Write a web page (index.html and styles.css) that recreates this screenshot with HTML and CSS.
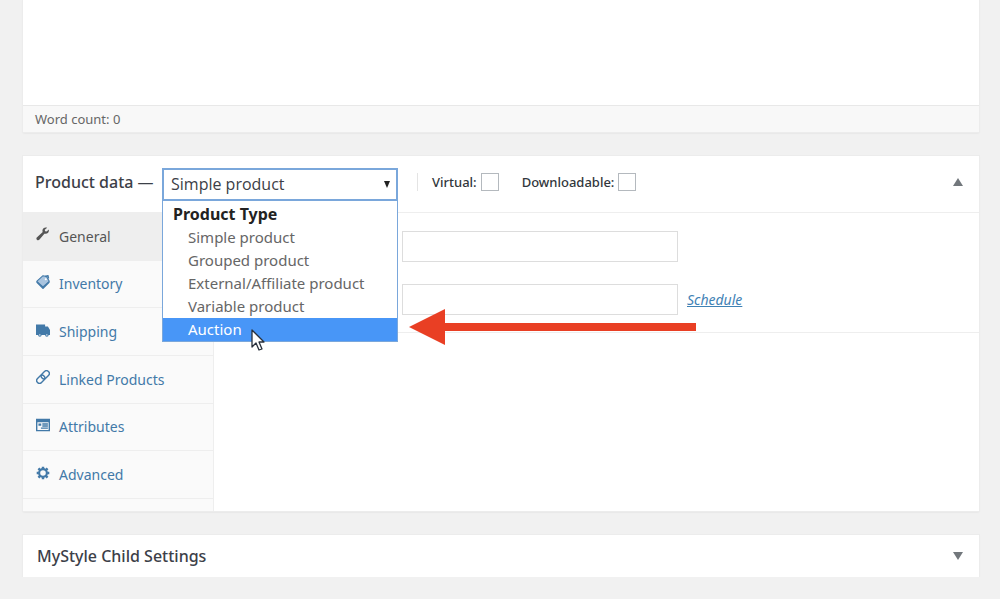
FILE: index.html
```html
<!DOCTYPE html>
<html lang="en">
<head>
    <meta charset="UTF-8">
    <meta name="viewport" content="width=device-width, initial-scale=1.0">
    <title>Edit product</title>
    <link rel="stylesheet" href="styles.css">
</head>
<body>

    <div class="editor">
        <textarea class="editor-text" aria-label="Product description"></textarea>
        <div class="word-count">Word count: 0</div>
    </div>

    <section class="postbox">
        <div class="product-header">
            <label class="title" for="product-type">Product data —</label>
            <div class="type-picker">
                <select id="product-type">
                    <option>Simple product</option>
                </select>
                <div class="type-menu" role="listbox" aria-label="Product Type">
                    <div class="type-group">Product Type</div>
                    <button type="button" role="option">Simple product</button>
                    <button type="button" role="option">Grouped product</button>
                    <button type="button" role="option">External/Affiliate product</button>
                    <button type="button" role="option">Variable product</button>
                    <button type="button" role="option" class="selected">Auction</button>
                </div>
                <!-- mouse pointer -->
                <svg class="pointer" width="16" height="24" viewBox="0 0 16 24">
                    <path d="M2 2v17l4-4 3 7 3-1-3-7h5z" fill="#fff" stroke="#28303c" stroke-width="1.3" stroke-linejoin="round"/>
                </svg>
                <!-- arrow to the Auction option -->
                <svg class="arrow" width="288" height="36" viewBox="0 0 288 36">
                    <path d="M0 18L36 0v14h251v8H36v14z" fill="#e93f24"/>
                </svg>
            </div>
            <div class="checks">
                <label>Virtual: <input type="checkbox"></label>
                <label>Downloadable: <input type="checkbox"></label>
            </div>
            <button type="button" class="toggle" aria-label="Collapse Product data">
                <svg width="10" height="8" viewBox="0 0 10 8"><path d="M5 0l5 8H0z"/></svg>
            </button>
        </div>

        <div class="product-body">
            <nav class="tabs">
                <a href="#general" class="active">
                    <svg width="14" height="14" viewBox="0 0 20 20"><path fill="currentColor" d="M18.500 3.500l-3.500 3-2-.5-.5-2 3.500-3C13 0 10.500 1 9.500 3.500c-.5 1.500-.3 2.500.1 3.500L1.500 14.500c-1.200 1-1.200 2.700-.2 3.700s2.700 1 3.700-.2l7-8.500c3.500 1.300 7-1.500 6.500-6z"/></svg>
                    General
                </a>
                <a href="#inventory">
                    <svg width="14" height="14" viewBox="0 0 20 20"><path fill="#a9c4df" stroke="currentColor" stroke-width="1.500" stroke-linejoin="round" d="M1 9l9-8 5 1 4 7-9 8z"/><path fill="none" stroke="currentColor" stroke-width="2" d="M1 10l9 9 9-9M13 2l4-1 1 4"/><circle cx="14" cy="6" r="1.500" fill="#fff"/></svg>
                    Inventory
                </a>
                <a href="#shipping">
                    <svg width="16" height="14" viewBox="0 0 20 18"><path fill="currentColor" d="M0 1h13v3h4l3 5v7h-2a2.500 2.500 0 0 1-5 0H8a2.500 2.500 0 0 1-5 0H0z"/><circle cx="5.500" cy="16" r="1" fill="#fff"/><circle cx="15.500" cy="16" r="1" fill="#fff"/></svg>
                    Shipping
                </a>
                <a href="#linked">
                    <svg width="14" height="14" viewBox="0 0 20 20"><g fill="none" stroke="currentColor" stroke-width="2" transform="rotate(-45 10 10)"><rect x="-1" y="6" width="13" height="8" rx="4"/><rect x="8" y="6" width="13" height="8" rx="4"/></g></svg>
                    Linked Products
                </a>
                <a href="#attributes">
                    <svg width="14" height="14" viewBox="0 0 20 20"><path fill="currentColor" fill-rule="evenodd" d="M0 1h20v18H0zM2 6v11h16V6zM3.500 8h4v3h-4zM9 7.500h8v2H9zm0 3h8v2H9zm-2 3h10v2H7z"/></svg>
                    Attributes
                </a>
                <a href="#advanced">
                    <svg width="14" height="14" viewBox="0 0 20 20"><circle cx="10" cy="10" r="5.500" fill="none" stroke="currentColor" stroke-width="3"/><path stroke="currentColor" stroke-width="3.500" d="M10 1v3M10 16v3M1 10h3M16 10h3M3.500 3.500l2 2M14.500 14.500l2 2M16.500 3.500l-2 2M5.500 14.500l-2 2"/></svg>
                    Advanced
                </a>
            </nav>
            <div class="options">
                <div class="prices">
                    <input type="text" aria-label="Regular price">
                    <div class="sale-row">
                        <input type="text" aria-label="Sale price">
                        <a href="#schedule">Schedule</a>
                    </div>
                </div>
            </div>
        </div>
    </section>

    <section class="postbox settings">
        <h2 class="title">MyStyle Child Settings</h2>
        <button type="button" class="toggle" aria-label="Expand MyStyle Child Settings">
            <svg width="10" height="8" viewBox="0 0 10 8"><path d="M0 0h10L5 8z"/></svg>
        </button>
    </section>

</body>
</html>
```

FILE: styles.css
```css
* {
    box-sizing: border-box;
}
body {
    margin: 0;
    padding: 0 21px 0 23px;
    background-color: #f1f1f1;
    color: #32373c;
    font-family: "Noto Sans", "Open Sans", sans-serif;
    font-size: 14px;
}
input, select, button, textarea {
    font-family: inherit;
    color: inherit;
}
button {
    border: none;
    background: none;
    padding: 0;
    cursor: pointer;
}
.editor, .postbox {
    background: white;
    box-shadow: 0 0 0 1px #ececec, 0 1px 2px rgba(0, 0, 0, 0.1);
    margin-bottom: 24px;
}
.editor-text {
    display: block;
    width: 100%;
    height: 105px;
    border: none;
    resize: none;
}
.word-count {
    height: 27px;
    line-height: 26px;
    padding-left: 12px;
    border-top: 1px solid #e8e8e8;
    background-color: #f8f8f8;
    color: #666;
    font-size: 13px;
}
.title {
    margin: 0;
    font-size: 16px;
    font-weight: 500;
    color: #3c4048;
}

/* product data header */
.product-header {
    display: flex;
    align-items: center;
    height: 57px;
    padding: 0 16px 4px 12px;
    border-bottom: 1px solid #eee;
}
.product-header .title {
    width: 127px;
}
.type-picker {
    position: relative;
    width: 236px;
    margin-top: 4px;
}
.type-picker select {
    display: block;
    width: 100%;
    height: 33px;
    padding: 0 7px;
    border: 2px solid #7aa7db;
    appearance: none;
    background: white;
    color: #3c4046;
    font-family: "Open Sans", sans-serif;
    font-size: 16px;
}
.type-picker::after {
    content: "";
    position: absolute;
    top: 13px;
    right: 8px;
    border: 3px solid transparent;
    border-top: 7px solid #222;
    border-bottom: none;
}
.type-menu {
    position: absolute;
    z-index: 1;
    top: 33px;
    left: 0;
    width: 100%;
    padding-top: 2px;
    border: 1px solid #7aa7db;
    border-top: none;
    background: white;
    font-size: 16px;
    line-height: 23px;
}
.type-group {
    padding-left: 10px;
    color: #222;
    font-weight: bold;
}
.type-menu button {
    display: block;
    width: 100%;
    height: 23px;
    padding-left: 25px;
    color: #666;
    font-size: 15px;
    line-height: 23px;
    text-align: left;
}
.type-menu .selected {
    background-color: #4896f7;
    color: white;
}
.pointer {
    position: absolute;
    z-index: 2;
    top: 160px;
    left: 88px;
}
.arrow {
    position: absolute;
    z-index: 2;
    top: 141px;
    left: 247px;
}
.checks {
    display: flex;
    gap: 23px;
    margin-left: 19px;
    padding-left: 14px;
    border-left: 1px solid #e4e4e4;
}
.checks label {
    display: flex;
    align-items: center;
    gap: 4px;
    font-size: 13px;
    font-weight: 500;
}
.checks input {
    appearance: none;
    width: 18px;
    height: 18px;
    margin: 0;
    border: 1px solid #b4b9be;
    background: white;
}
.toggle {
    display: flex;
    margin-left: auto;
    fill: #72777c;
}

/* tabs and panel */
.product-body {
    display: flex;
    height: 298px;
}
.tabs {
    display: grid;
    grid-template-rows: repeat(6, 1fr);
    width: 191px;
    padding-bottom: 12px;
    border-right: 1px solid #eee;
    background-color: #fafafa;
}
.tabs a {
    display: flex;
    align-items: center;
    gap: 9px;
    padding-left: 13px;
    border-bottom: 1px solid #eee;
    color: #4279a8;
    font-size: 14px;
    text-decoration: none;
}
.tabs svg {
    flex: none;
    width: 14px;
    margin-bottom: 4px;
}
.tabs .active {
    background-color: #eee;
    color: #555;
}
.options {
    flex: 1;
}
.prices {
    display: flex;
    flex-direction: column;
    gap: 22px;
    height: 120px;
    padding: 18px 0 0 188px;
    border-bottom: 1px solid #eee;
}
.prices input {
    display: block;
    width: 276px;
    height: 31px;
    border: 1px solid #ddd;
    background: white;
}
.sale-row {
    display: flex;
    align-items: center;
    gap: 9px;
}
.sale-row a {
    color: #3f82b5;
    font-size: 14px;
    font-style: italic;
}

.settings {
    display: flex;
    align-items: center;
    height: 42px;
    margin-bottom: 0;
    padding: 0 16px 0 14px;
}
```
